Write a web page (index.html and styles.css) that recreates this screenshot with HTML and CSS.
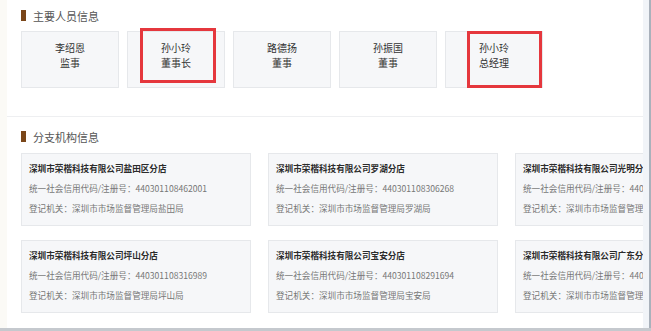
FILE: index.html
```html
<!DOCTYPE html>
<html lang="zh-CN">
<head>
  <meta charset="UTF-8">
  <title>企业信息</title>
  <link rel="stylesheet" href="styles.css">
</head>
<body>
  <div class="frame">
    <main class="panel">
      <section class="section people">
        <h2 class="section-title"><span class="bar"></span>主要人员信息</h2>
        <div class="people-list">
          <div class="person">
            <div>李绍恩</div>
            <div>监事</div>
          </div>
          <div class="person">
            <div>孙小玲</div>
            <div>董事长</div>
            <span class="mark mark-a"></span>
          </div>
          <div class="person">
            <div>路德扬</div>
            <div>董事</div>
          </div>
          <div class="person">
            <div>孙振国</div>
            <div>董事</div>
          </div>
          <div class="person">
            <div>孙小玲</div>
            <div>总经理</div>
            <span class="mark mark-b"></span>
          </div>
        </div>
      </section>

      <section class="section branches">
        <h2 class="section-title"><span class="bar"></span>分支机构信息</h2>
        <div class="branch-grid">
          <div class="branch">
            <div class="branch-name">深圳市荣楷科技有限公司盐田区分店</div>
            <div>统一社会信用代码/注册号：440301108462001</div>
            <div>登记机关：深圳市市场监督管理局盐田局</div>
          </div>
          <div class="branch">
            <div class="branch-name">深圳市荣楷科技有限公司罗湖分店</div>
            <div>统一社会信用代码/注册号：440301108306268</div>
            <div>登记机关：深圳市市场监督管理局罗湖局</div>
          </div>
          <div class="branch">
            <div class="branch-name">深圳市荣楷科技有限公司光明分店</div>
            <div>统一社会信用代码/注册号：4403</div>
            <div>登记机关：深圳市市场监督管理局</div>
          </div>
          <div class="branch">
            <div class="branch-name">深圳市荣楷科技有限公司坪山分店</div>
            <div>统一社会信用代码/注册号：440301108316989</div>
            <div>登记机关：深圳市市场监督管理局坪山局</div>
          </div>
          <div class="branch">
            <div class="branch-name">深圳市荣楷科技有限公司宝安分店</div>
            <div>统一社会信用代码/注册号：440301108291694</div>
            <div>登记机关：深圳市市场监督管理局宝安局</div>
          </div>
          <div class="branch">
            <div class="branch-name">深圳市荣楷科技有限公司广东分公司</div>
            <div>统一社会信用代码/注册号：4400</div>
            <div>登记机关：深圳市市场监督管理局</div>
          </div>
        </div>
      </section>
    </main>
    <div class="gutter"></div>
    <div class="scrollbar"></div>
  </div>
</body>
</html>
```

FILE: styles.css
```css
:root {
  --brown: #7a4619;
  --card-bg: #f6f7f9;
  --card-border: #e6e8eb;
  --mark: #e5373d;
}

* {
  margin: 0;
  padding: 0;
  box-sizing: border-box;
}

html, body {
  height: 331px;
  overflow: hidden;
}

body {
  font-family: "Noto Sans CJK SC", "Microsoft YaHei", sans-serif;
  background: #fbfaf6;
  color: #333;
}

.frame {
  display: flex;
  height: 331px;
  border-bottom: 3px solid #c5c9ce;
}

.panel {
  margin-left: 7px;
  width: 636px;
  background: #fff;
  overflow: hidden;
}

.gutter {
  width: 6px;
  background: #f1f4f8;
}

.scrollbar {
  width: 2px;
  background: #a9b1bb;
}

.section {
  padding-left: 14px;
}

.section-title {
  display: flex;
  align-items: center;
  gap: 7px;
  height: 11px;
  font-size: 11px;
  font-weight: normal;
  color: #555;
}

.bar {
  width: 5px;
  height: 11px;
  background: var(--brown);
}

/* main people */
.people {
  padding-top: 10px;
  padding-bottom: 28px;
  border-bottom: 1px solid #eeeff1;
}

.people-list {
  display: flex;
  gap: 8px;
  margin-top: 10px;
}

.person {
  position: relative;
  width: 98px;
  height: 57px;
  padding-top: 8px;
  background: var(--card-bg);
  border: 1px solid var(--card-border);
  text-align: center;
  font-size: 10px;
  line-height: 15px;
  color: #333;
}

.mark {
  position: absolute;
  border: 3px solid var(--mark);
}

.mark-a {
  left: 12px;
  top: -4px;
  width: 76px;
  height: 55px;
}

.mark-b {
  left: 21px;
  top: -1px;
  width: 75px;
  height: 57px;
}

/* branches */
.branches {
  padding-top: 14px;
}

.branch-grid {
  display: grid;
  grid-template-columns: repeat(3, 230px);
  grid-auto-rows: 73px;
  gap: 14px 17px;
  margin-top: 11px;
}

.branch {
  padding: 4px 7px 0;
  background: var(--card-bg);
  border: 1px solid var(--card-border);
  font-size: 8.6px;
  line-height: 20px;
  color: #777;
  white-space: nowrap;
}

.branch-name {
  font-weight: bold;
  color: #2b2b2b;
}
```
